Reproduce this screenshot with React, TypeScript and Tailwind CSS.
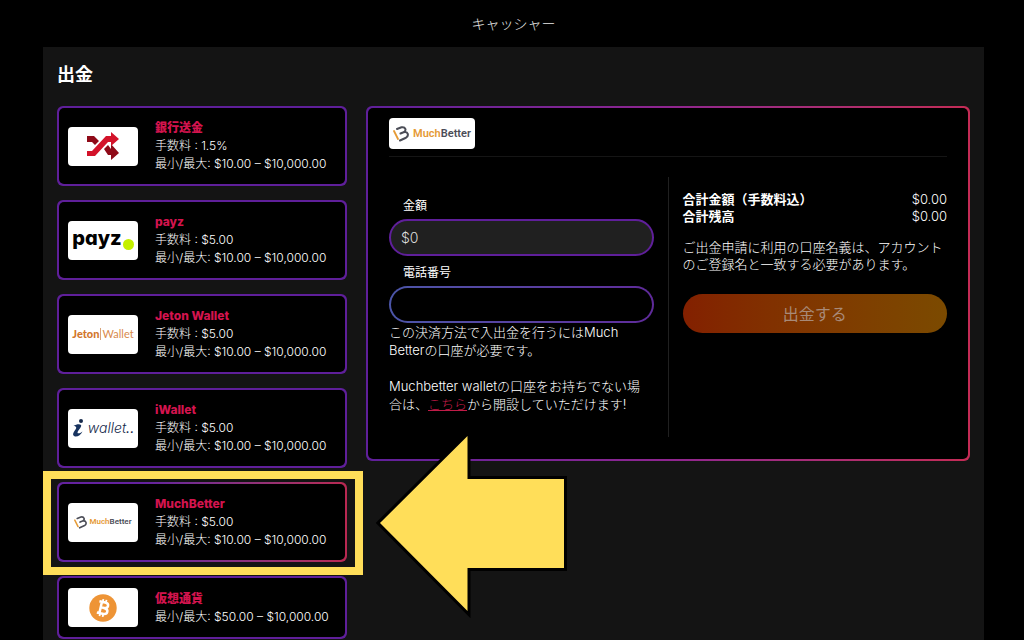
import type { ReactNode } from 'react';

function MuchBetterMark({ className }: { className: string }) {
  return (
    <svg viewBox="0 0 32 32" className={className} fill="none" aria-hidden="true">
      <path d="M2 10 L10 26" stroke="#e59a35" strokeWidth="3.6" strokeLinecap="round" />
      <path
        d="M8 6 L17 2.500 C25 1 28 9 21 12.500 L15 15 M21 12.500 C31 10 32 20 26 23.500 L14 29"
        stroke="#4b4d57"
        strokeWidth="4"
        strokeLinecap="round"
        strokeLinejoin="round"
      />
    </svg>
  );
}

function ShuffleMark() {
  return (
    <svg viewBox="0 0 34 28" className="h-7 w-[34px]" aria-hidden="true">
      <path d="M1 4 H8 L13 9 L9 13 L6 10 H1 Z" fill="#8f0a18" />
      <path d="M18 17 L22 13 L25 17 V12 L33 21 L25 28 V23 H22 Z" fill="#8f0a18" />
      <path d="M1 19 H6 L20 4 H25 V0 L33 7 L25 14 V10 H22 L9 24 H1 Z" fill="#d3132a" />
    </svg>
  );
}

function PayzLogo() {
  return (
    <span className="flex items-center gap-px font-['Inter',sans-serif] text-xl leading-5 font-extrabold text-black [font-feature-settings:'cv11','ss03']">
      <span className="pb-1">payz</span>
      <span className="mt-2 size-[11px] rounded-full bg-[#c4f000]" />
    </span>
  );
}

function JetonLogo() {
  return (
    <span className="flex items-center font-['Lato',sans-serif] text-[11px] leading-3 text-[#d98a4c]">
      <span className="font-black text-[#d2762c]">Jeton</span>
      <span className="mx-px h-3 w-px bg-[#d9a47a]" />
      <span>Wallet</span>
    </span>
  );
}

function IWalletLogo() {
  return (
    <span className="flex items-center gap-1 text-[#15294b]">
      <svg viewBox="0 0 24 36" className="h-[18px] w-3" aria-hidden="true">
        <circle cx="18" cy="4" r="4" fill="#15294b" />
        <path
          d="M3 14 C9 10 16 10 18 12 C20 16 12 22 11 27 C11 30 16 29 21 25 C18 32 11 36 6 35 C-1 33 3 26 7 21 C10 17 8 14 3 14 Z"
          fill="#17335f"
        />
      </svg>
      <span className="font-['Inter',sans-serif] text-sm leading-5 font-light italic [font-feature-settings:'cv11']">
        wallet<b>..</b>
      </span>
    </span>
  );
}

function MuchBetterLogo({ large = false }: { large?: boolean }) {
  return (
    <span className={large ? 'flex items-center gap-1 text-[11px]' : 'flex items-center gap-0.5 text-[8px]'}>
      <MuchBetterMark className={large ? 'size-4' : 'size-[13px]'} />
      <span className="font-['Roboto',sans-serif] leading-3 font-semibold whitespace-nowrap text-[#4b4d57]">
        <span className="text-[#e59a35]">Much</span>Better
      </span>
    </span>
  );
}

function BitcoinLogo() {
  return (
    <svg viewBox="0 0 28 28" className="size-7" aria-hidden="true">
      <circle cx="14" cy="14" r="13.7" fill="#ee9436" />
      <g transform="rotate(13 14 14)" fill="none" stroke="#fff">
        <path d="M9 8.2 H15 C19.6 8.2 19.6 13.7 15 13.7 H11.5 M15 13.7 C20.4 13.7 20.4 19.7 15 19.7 H9 M11.6 8.2 V19.7" strokeWidth="2.5" />
        <path d="M12.4 5.3 V8.5 M15.6 5.3 V8.5 M12.4 19.5 V22.7 M15.6 19.5 V22.7" strokeWidth="1.8" />
      </g>
    </svg>
  );
}

type Method = { name: string; fee?: string; range: string; logo: ReactNode; selected?: boolean };

const methods: Method[] = [
  { name: '銀行送金', fee: '1.5%', range: '$10.00 – $10,000.00', logo: <ShuffleMark /> },
  { name: 'payz', fee: '$5.00', range: '$10.00 – $10,000.00', logo: <PayzLogo /> },
  { name: 'Jeton Wallet', fee: '$5.00', range: '$10.00 – $10,000.00', logo: <JetonLogo /> },
  { name: 'iWallet', fee: '$5.00', range: '$10.00 – $10,000.00', logo: <IWalletLogo /> },
  { name: 'MuchBetter', fee: '$5.00', range: '$10.00 – $10,000.00', logo: <MuchBetterLogo />, selected: true },
  { name: '仮想通貨', range: '$50.00 – $10,000.00', logo: <BitcoinLogo /> },
];

function Highlight() {
  return (
    <span className="pointer-events-none">
      <span className="absolute -top-[11px] -right-4 -bottom-[13px] -left-3.5 z-10 border-8 border-[#ffde59]" />
      <svg
        viewBox="0 0 194 190"
        className="absolute -top-[54px] left-[318px] z-10 h-[190px] w-[194px]"
        aria-hidden="true"
      >
        <path
          d="M5 95 L92.500 8 V51 H189 V140 H92.500 V183 Z"
          fill="#ffde59"
          stroke="#000"
          strokeWidth="6"
          paintOrder="stroke"
        />
      </svg>
    </span>
  );
}

function MethodCard({ method }: { method: Method }) {
  return (
    <li className="relative">
      <button
        type="button"
        className={
          method.selected
            ? 'block w-full rounded-md bg-linear-to-r from-[#6422a0] from-30% to-[#b92851] p-0.5 text-left'
            : 'block w-full rounded-md bg-[#5f1f9a] p-0.5 text-left'
        }
      >
        <span
          className={
            method.fee
              ? 'flex items-center gap-[17px] rounded-[5px] bg-black px-[9px] py-[11px]'
              : 'flex items-center gap-[17px] rounded-[5px] bg-black px-[9px] py-2.5'
          }
        >
          <span className="flex h-[39px] w-[70px] shrink-0 items-center justify-center rounded bg-white">
            {method.logo}
          </span>
          <span className="block text-xs leading-[18px] font-light whitespace-nowrap text-white">
            <span className="block font-extrabold text-[#d3144e]">{method.name}</span>
            {method.fee && <span className="block">手数料 : {method.fee}</span>}
            <span className="block">最小/最大: {method.range}</span>
          </span>
        </span>
      </button>
      {method.selected && <Highlight />}
    </li>
  );
}

function WithdrawalPanel() {
  return (
    <section className="min-w-0 flex-1 rounded-md bg-linear-to-r from-[#5f1f9a] via-[#8f2590] to-[#c42b55] p-0.5">
      <div className="rounded-[5px] bg-black px-[21px] pt-2.5 pb-[22px]">
        <div className="border-b border-[#151515] pb-[7px]">
          <div className="flex h-[31px] w-[86px] items-center justify-center rounded bg-white">
            <MuchBetterLogo large />
          </div>
        </div>
        <div className="mt-5 flex">
          <div className="flex-1 border-r border-[#202020] pt-5 pr-3.5 pb-6 text-[13px] leading-[18px] font-light text-white">
            <label htmlFor="amount" className="block pl-3.5 text-xs leading-[18px] font-normal">
              金額
            </label>
            <input
              id="amount"
              defaultValue="$0"
              className="mt-1 block h-[37px] w-full rounded-full border-2 border-[#5f1f9a] bg-[#202020] px-2.5 text-sm text-[#dedede]"
            />
            <label htmlFor="phone" className="mt-2 block pl-3.5 text-xs leading-[18px] font-normal">
              電話番号
            </label>
            <div className="mt-1 rounded-full bg-linear-to-r from-[#4b55a8] to-[#5f2a9a] p-0.5">
              <input id="phone" type="tel" className="block h-[33px] w-full rounded-full bg-black px-3 text-sm" />
            </div>
            <p className="whitespace-nowrap">
              この決済方法で入出金を行うにはMuch
              <br />
              Betterの口座が必要です。
            </p>
            <p className="mt-[18px] whitespace-nowrap">
              Muchbetter walletの口座をお持ちでない場
              <br />
              合は、
              <a href="#open" className="text-[#c01c48] underline">
                こちら
              </a>
              から開設していただけます!
            </p>
          </div>
          <div className="flex-1 pt-3.5 pl-3.5 text-[13px] leading-[17px] font-light text-white">
            <dl>
              <div className="flex justify-between">
                <dt className="font-bold">合計金額（手数料込）</dt>
                <dd>$0.00</dd>
              </div>
              <div className="flex justify-between">
                <dt className="font-bold">合計残高</dt>
                <dd>$0.00</dd>
              </div>
            </dl>
            <p className="mt-3.5 whitespace-nowrap">
              ご出金申請に利用の口座名義は、アカウント
              <br />
              のご登録名と一致する必要があります。
            </p>
            <button
              type="button"
              className="mt-[21px] block h-[39px] w-full rounded-full bg-linear-to-r from-[#832000] to-[#7b4a00] text-base font-normal text-[#a88a78]"
            >
              出金する
            </button>
          </div>
        </div>
      </div>
    </section>
  );
}

export default function App() {
  return (
    <div className="flex min-h-screen flex-col overflow-hidden bg-black pr-10 pl-[43px] font-['Inter','Noto_Sans_CJK_JP',sans-serif]">
      <header className="flex h-[47px] items-center justify-center text-sm font-light text-[#e8e8e8]">
        キャッシャー
      </header>
      <main className="flex-1 bg-[#141414] px-3.5 pt-4 pb-0.5">
        <h1 className="text-lg leading-6 font-bold text-white">出金</h1>
        <div className="mt-[19px] flex items-start gap-[19px]">
          <ul className="flex w-[290px] shrink-0 flex-col gap-3.5">
            {methods.map((method) => (
              <MethodCard key={method.name} method={method} />
            ))}
          </ul>
          <WithdrawalPanel />
        </div>
      </main>
    </div>
  );
}
